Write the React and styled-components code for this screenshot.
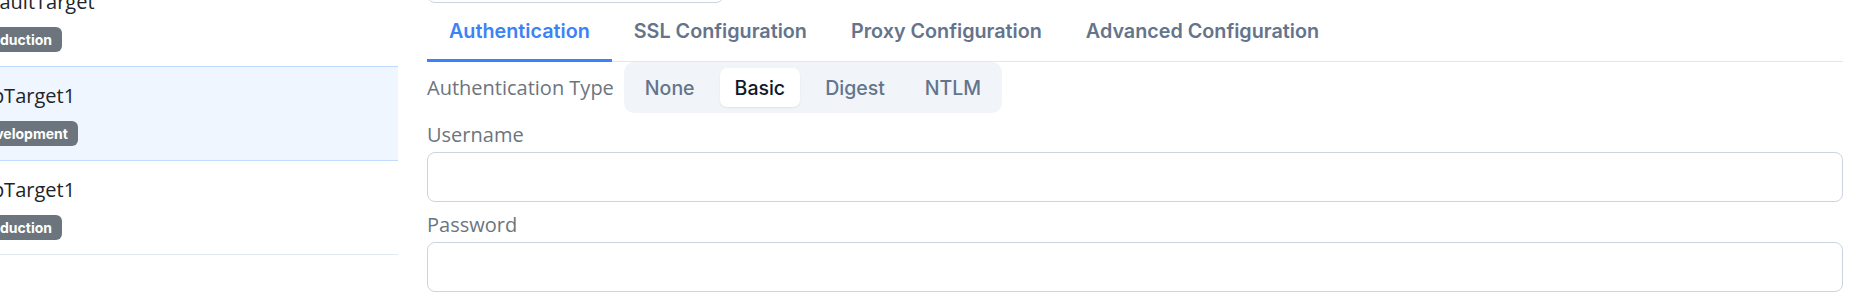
import React, { useState } from "react";
import styled, { createGlobalStyle } from "styled-components";

const GlobalStyle = createGlobalStyle`
  html, body {
    margin: 0;
    padding: 0;
    background: #ffffff;
    overflow: hidden;
  }
  body {
    font-family: "Open Sans", "Noto Sans", sans-serif;
  }
  * { box-sizing: border-box; }
`;

const Page = styled.div`
  display: flex;
  align-items: flex-start;
  margin-left: -49px;
`;

const Sidebar = styled.div`
  width: 447px;
  flex-shrink: 0;
  margin-top: -28px;
  display: flex;
  flex-direction: column;
`;

const TargetRow = styled.div`
  position: relative;
  z-index: ${(p) => (p.$active ? 1 : 0)};
  display: flex;
  flex-direction: column;
  align-items: flex-start;
  gap: 10px;
  padding: 14px 16px;
  margin-top: -1px;
  border-top: 1px solid ${(p) => (p.$active ? "#bfdbfe" : "#e2e8f0")};
  border-bottom: 1px solid ${(p) => (p.$active ? "#bfdbfe" : "#e2e8f0")};
  background: ${(p) => (p.$active ? "#eff6ff" : "#ffffff")};
  &:first-child {
    margin-top: 0;
  }
`;

const TargetName = styled.div`
  font-family: "Open Sans", sans-serif;
  font-size: 20px;
  line-height: 30px;
  color: #212529;
  white-space: nowrap;
`;

const EnvBadge = styled.span`
  display: inline-flex;
  align-items: center;
  height: 25px;
  padding: 0 10px;
  border-radius: 6px;
  background: #6c757d;
  color: #ffffff;
  font-family: Inter, sans-serif;
  font-weight: 700;
  font-size: 14px;
  white-space: nowrap;
`;

const Main = styled.div`
  flex: 1;
  min-width: 0;
  padding: 0 20px 0 29px;
  display: flex;
  flex-direction: column;
`;

const TopField = styled.div`
  width: 297px;
  height: 40px;
  margin-top: -37px;
  border: 1px solid #cbd5e1;
  border-radius: 8px;
  background: #ffffff;
`;

const TabBar = styled.div`
  display: flex;
  border-bottom: 1px solid #e2e8f0;
`;

const Tab = styled.button`
  height: 59px;
  margin-bottom: -1px;
  padding: 0 22px 1px;
  border: none;
  border-bottom: 3px solid ${(p) => (p.$active ? "#3b82f6" : "transparent")};
  background: transparent;
  font-family: Inter, sans-serif;
  font-weight: 600;
  font-size: 19.75px;
  color: ${(p) => (p.$active ? "#3b82f6" : "#64748b")};
  cursor: pointer;
  white-space: nowrap;
`;

const AuthTypeRow = styled.div`
  display: flex;
  align-items: center;
  gap: 10px;
`;

const FieldLabel = styled.label`
  display: block;
  font-family: "Open Sans", sans-serif;
  font-size: 20px;
  line-height: 30px;
  color: #6c757d;
  white-space: nowrap;
`;

const Segmented = styled.div`
  display: flex;
  gap: 10px;
  padding: 6px;
  border-radius: 10px;
  background: #f1f5f9;
`;

const SegmentButton = styled.button`
  height: 39px;
  padding: 0 15px;
  border: none;
  border-radius: 7px;
  background: ${(p) => (p.$active ? "#ffffff" : "transparent")};
  box-shadow: ${(p) => (p.$active ? "0 1px 2px rgba(15, 23, 42, 0.08)" : "none")};
  font-family: Inter, sans-serif;
  font-weight: 500;
  font-size: 19.5px;
  color: ${(p) => (p.$active ? "#0f172a" : "#64748b")};
  cursor: pointer;
`;

const Field = styled.div`
  display: flex;
  flex-direction: column;
  gap: 2px;
  margin-top: ${(p) => p.$top}px;
`;

const TextInput = styled.input`
  width: 100%;
  height: 50px;
  padding: 0 14px;
  border: 1px solid #cbd5e1;
  border-radius: 8px;
  background: #ffffff;
  font-family: "Open Sans", sans-serif;
  font-size: 18px;
  outline: none;
`;

const targets = [
  { name: "DefaultTarget", env: "Production" },
  { name: "AppTarget1", env: "Development", active: true },
  { name: "AppTarget1", env: "Production" },
];

const tabs = [
  "Authentication",
  "SSL Configuration",
  "Proxy Configuration",
  "Advanced Configuration",
];

const authTypes = ["None", "Basic", "Digest", "NTLM"];

export default function App() {
  const [tab, setTab] = useState(0);
  const [auth, setAuth] = useState("Basic");
  return (
    <>
      <GlobalStyle />
      <Page>
        <Sidebar>
          {targets.map((t, i) => (
            <TargetRow key={i} $active={t.active}>
              <TargetName>{t.name}</TargetName>
              <EnvBadge>{t.env}</EnvBadge>
            </TargetRow>
          ))}
        </Sidebar>
        <Main>
          <TopField />
          <TabBar>
            {tabs.map((t, i) => (
              <Tab key={t} $active={i === tab} onClick={() => setTab(i)}>
                {t}
              </Tab>
            ))}
          </TabBar>
          <AuthTypeRow>
            <FieldLabel as="span">Authentication Type</FieldLabel>
            <Segmented>
              {authTypes.map((a) => (
                <SegmentButton key={a} $active={a === auth} onClick={() => setAuth(a)}>
                  {a}
                </SegmentButton>
              ))}
            </Segmented>
          </AuthTypeRow>
          <Field $top={7}>
            <FieldLabel htmlFor="username">Username</FieldLabel>
            <TextInput id="username" type="text" />
          </Field>
          <Field $top={8}>
            <FieldLabel htmlFor="password">Password</FieldLabel>
            <TextInput id="password" type="password" />
          </Field>
        </Main>
      </Page>
    </>
  );
}
